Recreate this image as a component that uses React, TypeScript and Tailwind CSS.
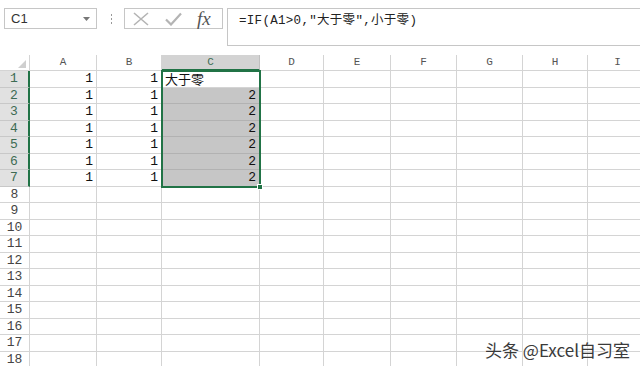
import React from "react";

const cols = [
  { name: "A", w: 67 },
  { name: "B", w: 65 },
  { name: "C", w: 98 },
  { name: "D", w: 64 },
  { name: "E", w: 67 },
  { name: "F", w: 66 },
  { name: "G", w: 66 },
  { name: "H", w: 65 },
  { name: "I", w: 60 },
];

const rows = Array.from({ length: 18 }, (_, i) => i + 1);

function cellValue(row: number, col: string) {
  if (row > 7) return "";
  if (col === "A" || col === "B") return "1";
  if (col === "C") return row === 1 ? "大于零" : "2";
  return "";
}

export default function App() {
  return (
    <div className="relative w-[640px] h-[366px] overflow-hidden bg-white font-['Liberation_Mono','Noto_Sans_CJK_SC',monospace]">
      {/* formula bar area */}
      <div className="flex items-start h-[55px] pt-[8px]">
        <div className="ml-[4px] w-[93px] h-[21px] border border-[#c6c6c6] flex items-center justify-between pl-[6px] pr-[6px]">
          <span className="text-[13px] text-[#333] font-['Liberation_Sans',sans-serif]">C1</span>
          <svg width="7" height="4" viewBox="0 0 7 4">
            <path d="M0 0h7L3.5 4z" fill="#777" />
          </svg>
        </div>
        <div className="ml-[13px] w-[2px] h-[21px] flex flex-col items-center justify-center gap-[2px]">
          <span className="w-[1px] h-[2px] bg-[#999]" />
          <span className="w-[1px] h-[2px] bg-[#999]" />
          <span className="w-[1px] h-[2px] bg-[#999]" />
        </div>
        <div className="ml-[12px] w-[99px] h-[21px] border border-[#c6c6c6] flex items-center">
          <svg className="ml-[8px]" width="16" height="14" viewBox="0 0 16 14">
            <path d="M1 1L15 13M15 1L1 13" stroke="#b4b4b4" strokeWidth="1.6" fill="none" />
          </svg>
          <svg className="ml-[16px]" width="17" height="14" viewBox="0 0 17 14">
            <path d="M1 7.5L6 12.5L16 1.5" stroke="#b4b4b4" strokeWidth="2.2" fill="none" />
          </svg>
          <span className="ml-[15px] text-[19px] italic leading-none text-[#555] font-['Liberation_Serif',serif]">
            fx
          </span>
        </div>
        <div className="ml-[4px] flex-1 h-[38px] border-l border-t border-b border-[#c6c6c6] pl-[11px] pt-[3px] text-[12.5px] text-[#222] tracking-[0.3px]">
          =IF(A1&gt;0,″大于零″,小于零)
        </div>
      </div>

      {/* grid */}
      <div className="relative">
        <div className="flex h-[16px]">
          <div className="relative w-[30px] shrink-0 border-r border-b border-[#d4d4d4]">
            <svg className="absolute right-[3px] bottom-[2px]" width="8" height="8" viewBox="0 0 8 8">
              <path d="M8 0V8H0z" fill="#cfcfcf" />
            </svg>
          </div>
          {cols.map((c) => (
            <div
              key={c.name}
              style={{ width: c.w }}
              className={
                c.name === "C"
                  ? "shrink-0 bg-[#d3d3d3] border-r border-[#c0c0c0] border-b-2 border-b-[#217346] flex items-center justify-center text-[11px] text-[#3d6b52]"
                  : "shrink-0 border-r border-b border-[#d4d4d4] flex items-center justify-center text-[11px] text-[#555]"
              }
            >
              {c.name}
            </div>
          ))}
        </div>
        {rows.map((r) => {
          const sel = r <= 7;
          return (
            <div key={r} className={r % 2 === 1 ? "flex h-[17px]" : "flex h-[16px]"}>
              <div
                className={
                  sel
                    ? "w-[30px] shrink-0 bg-[#e1e1e1] border-r-2 border-r-[#217346] border-b border-b-[#c8c8c8] flex items-center justify-center text-[13px] text-[#3d6b52]"
                    : "w-[30px] shrink-0 border-r border-b border-[#d4d4d4] flex items-center justify-center text-[13px] text-[#444]"
                }
              >
                {r}
              </div>
              {cols.map((c) => {
                const v = cellValue(r, c.name);
                const shaded = c.name === "C" && r >= 2 && r <= 7;
                const cjk = c.name === "C" && r === 1;
                return (
                  <div
                    key={c.name}
                    style={{ width: c.w }}
                    className={
                      shaded
                        ? "shrink-0 bg-[#c6c6c6] border-r border-b border-[#b2b2b2] flex items-center justify-end pr-[3px] text-[13px] text-[#111]"
                        : cjk
                        ? "shrink-0 border-r border-b border-[#d4d4d4] flex items-center pl-[3px] text-[13px] text-[#111] font-['Noto_Sans_CJK_SC',sans-serif]"
                        : "shrink-0 border-r border-b border-[#d4d4d4] flex items-center justify-end pr-[3px] text-[13px] text-[#111]"
                    }
                  >
                    {v}
                  </div>
                );
              })}
            </div>
          );
        })}

        {/* selection outline C1:C7 */}
        <div className="absolute left-[161px] top-[15px] w-[100px] h-[118px] border-2 border-[#217346] pointer-events-none">
          <div className="absolute -right-[4px] -bottom-[4px] w-[6px] h-[6px] bg-[#217346] border border-white" />
        </div>
      </div>

      {/* watermark */}
      <div className="absolute right-[10px] bottom-[8px] text-[17px] leading-none text-[#3a3a3a] font-['Noto_Sans_CJK_SC',sans-serif] [text-shadow:0_0_2px_#fff,0_0_2px_#fff]">
        头条 @Excel自习室
      </div>
    </div>
  );
}
